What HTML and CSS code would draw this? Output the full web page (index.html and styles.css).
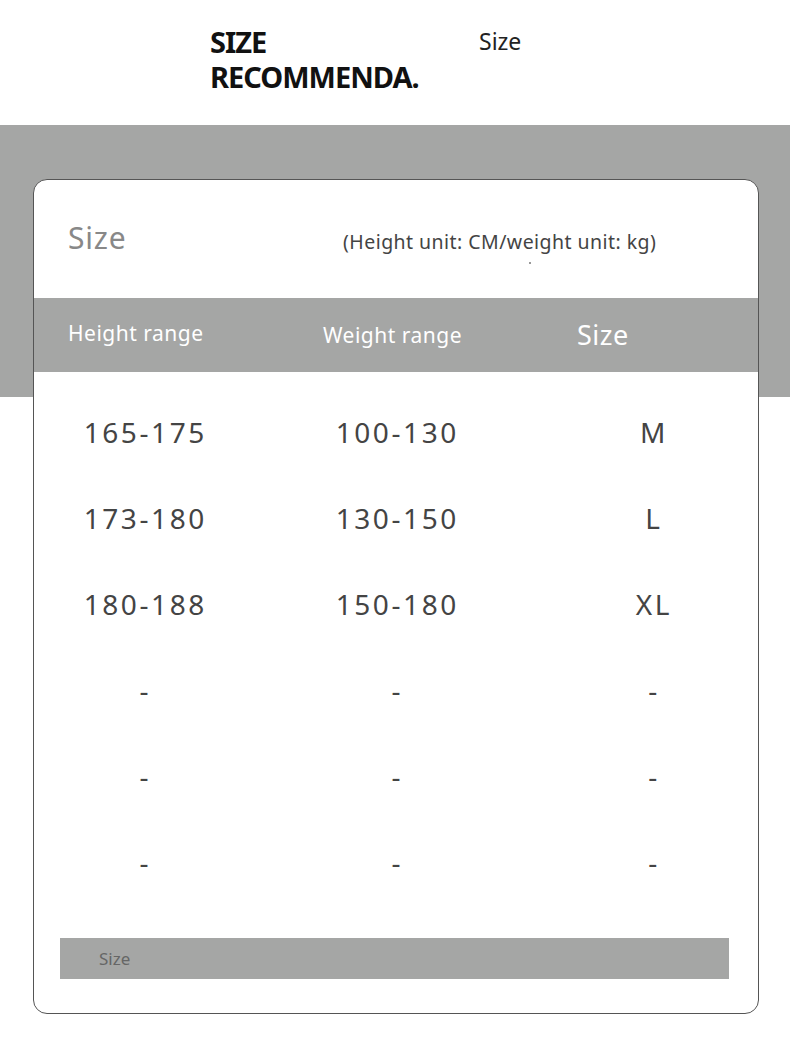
FILE: index.html
```html
<!DOCTYPE html>
<html>
<head>
<meta charset="utf-8">
<link rel="stylesheet" href="styles.css">
</head>
<body>
<header class="top">
  <h1 class="title"><span class="tline">SIZE</span><span class="tline">RECOMMENDA.</span></h1>
  <div class="top-size">Size</div>
</header>
<section class="stage">
  <div class="card">
    <div class="card-head">
      <div class="card-size">Size</div>
      <div class="units">(Height unit: CM/weight unit: kg)<span class="dot"></span></div>
    </div>
    <div class="thead">
      <div class="th th1">Height range</div>
      <div class="th th2">Weight range</div>
      <div class="th th3">Size</div>
    </div>
    <div class="tbody">
      <div class="row"><span class="c1">165-175</span><span class="c2">100-130</span><span class="c3">M</span></div>
      <div class="row"><span class="c1">173-180</span><span class="c2">130-150</span><span class="c3">L</span></div>
      <div class="row"><span class="c1">180-188</span><span class="c2">150-180</span><span class="c3">XL</span></div>
      <div class="row"><span class="c1">-</span><span class="c2">-</span><span class="c3">-</span></div>
      <div class="row"><span class="c1">-</span><span class="c2">-</span><span class="c3">-</span></div>
      <div class="row"><span class="c1">-</span><span class="c2">-</span><span class="c3">-</span></div>
    </div>
    <div class="foot">Size</div>
  </div>
</section>
</body>
</html>
```
FILE: styles.css
```css
* { box-sizing: border-box; }
html, body { margin: 0; padding: 0; background: #fff; }
body { font-family: "Noto Sans", "Open Sans", sans-serif; width: 790px; height: 1044px; overflow: hidden; }

.top { height: 125px; display: flex; padding-left: 210px; padding-top: 24px; }
.title { margin: 0; font-size: 29px; font-weight: 700; color: #111; letter-spacing: -1px; width: 269px; display: flex; flex-direction: column; }
.tline { display: block; line-height: 35px; }
.top-size { font-size: 23px; color: #222; line-height: 30px; padding-top: 2px; }

.stage {
  background: linear-gradient(to bottom, #a5a6a5 0, #a5a6a5 272px, #fff 272px);
  padding: 54px 31px 0 33px;
}
.card {
  background: #fff;
  border: 1px solid #555;
  border-radius: 14px;
  height: 835px;
  overflow: hidden;
  display: flex;
  flex-direction: column;
}
.card-head { height: 118px; display: flex; align-items: center; padding-left: 34px; }
.card-size { font-size: 30px; letter-spacing: 0.8px; color: #888; width: 275px; padding-bottom: 4px; }
.units { font-size: 19.5px; letter-spacing: 0.45px; color: #444; position: relative; padding-top: 4px; }
.dot { position: absolute; left: 186px; top: 38px; width: 2px; height: 2px; background: #999; }

.thead { height: 74px; background: #a5a6a5; display: flex; align-items: center; color: #fff; }
.th { font-size: 21px; letter-spacing: 0.5px; }
.th1 { width: 289px; padding-left: 34px; padding-bottom: 4px; }
.th2 { width: 254px; }
.th3 { font-size: 27px; padding-bottom: 2px; }

.tbody { padding-top: 17px; }
.row {
  height: 86px;
  display: grid;
  grid-template-columns: 220px 284px 220px;
  align-items: center;
  font-size: 28px;
  color: #444;
  letter-spacing: 2.6px;
}
.row span { text-align: center; padding-left: 2.6px; }
.row .c3 { padding-left: 12px; }

.foot { margin: 33px 29px 0 26px; height: 41px; background: #a5a6a5; color: #666; font-size: 17px; display: flex; align-items: center; padding-left: 39px; }
```
